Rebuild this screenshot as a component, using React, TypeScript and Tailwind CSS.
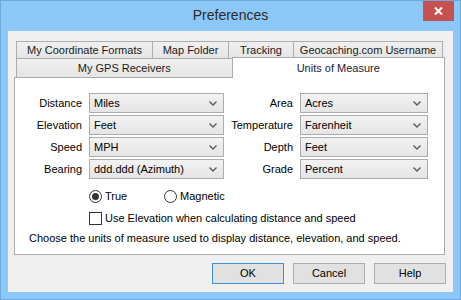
import React from "react";

const font = { fontFamily: '"Liberation Sans", Arial, sans-serif' };

function Chevron() {
  return (
    <svg width="8" height="5" viewBox="0 0 8 5" className="shrink-0">
      <path d="M0.5 0.5 L4 4 L7.5 0.5" fill="none" stroke="#5a5a5a" strokeWidth="1.4" />
    </svg>
  );
}

function Select({ value, width }: { value: string; width: string }) {
  return (
    <div
      className={`${width} h-[20px] flex items-center justify-between pl-[4px] pr-[6px] border border-[#acacac] bg-gradient-to-b from-[#f2f2f2] to-[#e5e5e5] text-[11px] text-black`}
    >
      <span>{value}</span>
      <Chevron />
    </div>
  );
}

function Row({
  label,
  value,
  labelW,
  selectW,
}: {
  label: string;
  value: string;
  labelW: string;
  selectW: string;
}) {
  return (
    <div className="flex items-center gap-[7px] h-[20px]">
      <div className={`${labelW} flex justify-end whitespace-nowrap text-[11px] text-black`}>
        <span className="shrink-0">{label}</span>
      </div>
      <Select value={value} width={selectW} />
    </div>
  );
}

function Tab({ label, w, first }: { label: string; w: string; first?: boolean }) {
  return (
    <div
      className={`${w} ${first ? "" : "-ml-px"} h-full flex items-center justify-center border-t border-l border-r border-[#acacac] bg-gradient-to-b from-[#f0f0f0] to-[#e5e5e5] text-[11px] text-[#1a1a1a] whitespace-nowrap`}
    >
      {label}
    </div>
  );
}

function Button({ label, focused }: { label: string; focused?: boolean }) {
  return (
    <div
      className={`w-[72px] h-[21px] flex items-center justify-center border ${
        focused ? "border-[#3c8fd8]" : "border-[#adadad]"
      } bg-[#e1e1e1] text-[11px] text-black`}
    >
      {label}
    </div>
  );
}

export default function App() {
  return (
    <div className="w-[461px] h-[300px] border border-[#6ea9dd] bg-[#8bc7f7] flex flex-col" style={font}>
      <div className="relative h-[30px] flex items-center justify-center pb-[1px]">
        <span className="text-[14px] text-[#2b2b2b]">Preferences</span>
        <div className="absolute top-0 right-[6px] w-[31px] h-[20px] bg-[#c75050] flex items-center justify-center">
          <svg width="9" height="8" viewBox="0 0 9 8">
            <path d="M1 0.5 L8 7.5 M8 0.5 L1 7.5" stroke="white" strokeWidth="2" />
          </svg>
        </div>
      </div>

      <div className="mx-[7px] mb-[7px] flex-1 bg-[#f0f0f0] flex flex-col pt-[10px] pl-[6px] pr-[7px]">
        <div className="flex flex-col w-[431px]">
          <div className="flex h-[17px] ml-[2px]">
            <Tab label="My Coordinate Formats" w="w-[137px]" first />
            <Tab label="Map Folder" w="w-[77px]" />
            <Tab label="Tracking" w="w-[66px]" />
            <Tab label="Geocaching.com Username" w="w-[150px]" />
          </div>
          <div className="flex items-end h-[19px] ml-[2px]">
            <div className="w-[217px] h-[19px] flex items-center justify-center border-t border-l border-r border-[#acacac] bg-gradient-to-b from-[#f0f0f0] to-[#e5e5e5] text-[11px] text-[#1a1a1a]">
              My GPS Receivers
            </div>
            <div className="relative z-10 -ml-px -mb-px w-[214px] h-[21px] flex items-start justify-center pt-[2px] border-t border-l border-r border-[#acacac] bg-white text-[11px] text-[#1a1a3a]">
              Units of Measure
            </div>
          </div>
          <div className="h-[178px] border border-[#acacac] bg-white flex flex-col pt-[15px]">
            <div className="flex gap-[9px]">
              <div className="flex flex-col gap-[2px]">
                <Row label="Distance" value="Miles" labelW="w-[67px]" selectW="w-[135px]" />
                <Row label="Elevation" value="Feet" labelW="w-[67px]" selectW="w-[135px]" />
                <Row label="Speed" value="MPH" labelW="w-[67px]" selectW="w-[135px]" />
                <Row label="Bearing" value="ddd.ddd (Azimuth)" labelW="w-[67px]" selectW="w-[135px]" />
              </div>
              <div className="flex flex-col gap-[2px]">
                <Row label="Area" value="Acres" labelW="w-[60px]" selectW="w-[128px]" />
                <Row label="Temperature" value="Farenheit" labelW="w-[60px]" selectW="w-[128px]" />
                <Row label="Depth" value="Feet" labelW="w-[60px]" selectW="w-[128px]" />
                <Row label="Grade" value="Percent" labelW="w-[60px]" selectW="w-[128px]" />
              </div>
            </div>

            <div className="flex items-center h-[16px] mt-[9px] pl-[74px] text-[11px] text-black">
              <div className="flex items-center gap-[3px] w-[75px]">
                <div className="w-[13px] h-[13px] rounded-full border border-[#333] bg-white flex items-center justify-center">
                  <div className="w-[7px] h-[7px] rounded-full bg-[#333]" />
                </div>
                <span>True</span>
              </div>
              <div className="flex items-center gap-[3px]">
                <div className="w-[13px] h-[13px] rounded-full border border-[#333] bg-white" />
                <span>Magnetic</span>
              </div>
            </div>

            <div className="flex items-center gap-[3px] h-[16px] mt-[6px] pl-[74px] text-[11px] text-black">
              <div className="w-[13px] h-[13px] border border-[#333] bg-white" />
              <span>Use Elevation when calculating distance and speed</span>
            </div>

            <div className="flex items-center h-[16px] mt-[4px] pl-[14px] text-[11px] text-black">
              Choose the units of measure used to display distance, elevation, and speed.
            </div>
          </div>
        </div>

        <div className="flex justify-end gap-[9px] mt-[8px]">
          <Button label="OK" focused />
          <Button label="Cancel" />
          <Button label="Help" />
        </div>
      </div>
    </div>
  );
}
